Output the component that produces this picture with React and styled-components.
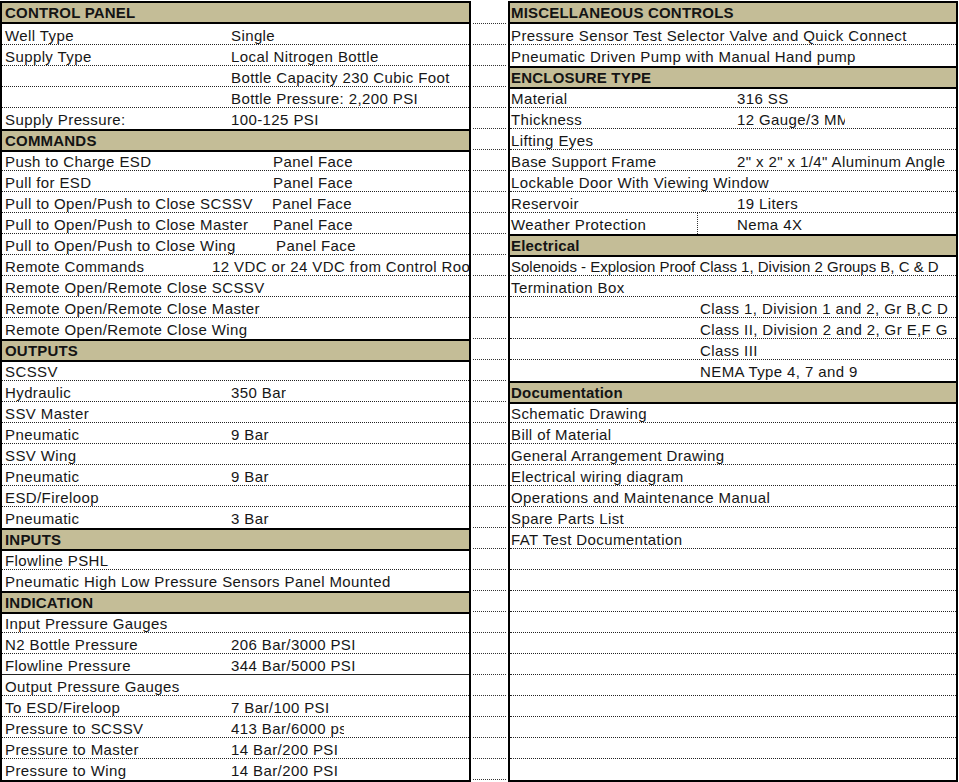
import React from 'react';
import styled, { createGlobalStyle } from 'styled-components';

// sheet data: h = section header, l = label, v = value, at = value column offset
const LEFT = [
  { h: 'CONTROL PANEL' },
  { l: 'Well Type', v: 'Single' },
  { l: 'Supply Type', v: 'Local Nitrogen Bottle' },
  { l: '', v: 'Bottle Capacity 230 Cubic Foot' },
  { l: '', v: 'Bottle Pressure: 2,200 PSI' },
  { l: 'Supply Pressure:', v: '100-125 PSI' },
  { h: 'COMMANDS' },
  { l: 'Push to Charge ESD', v: 'Panel Face', at: 271 },
  { l: 'Pull for ESD', v: 'Panel Face', at: 271 },
  { l: 'Pull to Open/Push to Close SCSSV', v: 'Panel Face', at: 270 },
  { l: 'Pull to Open/Push to Close Master', v: 'Panel Face', at: 271 },
  { l: 'Pull to Open/Push to Close Wing', v: 'Panel Face', at: 274 },
  { l: 'Remote Commands', v: '12 VDC or 24 VDC from Control Room', at: 210 },
  { l: 'Remote Open/Remote Close SCSSV' },
  { l: 'Remote Open/Remote Close Master' },
  { l: 'Remote Open/Remote Close Wing' },
  { h: 'OUTPUTS' },
  { l: 'SCSSV' },
  { l: 'Hydraulic', v: '350 Bar' },
  { l: 'SSV Master' },
  { l: 'Pneumatic', v: '9 Bar' },
  { l: 'SSV Wing' },
  { l: 'Pneumatic', v: '9 Bar' },
  { l: 'ESD/Fireloop' },
  { l: 'Pneumatic', v: '3 Bar' },
  { h: 'INPUTS' },
  { l: 'Flowline PSHL' },
  { l: 'Pneumatic High Low Pressure Sensors Panel Mounted' },
  { h: 'INDICATION' },
  { l: 'Input Pressure Gauges' },
  { l: 'N2 Bottle Pressure', v: '206 Bar/3000 PSI' },
  { l: 'Flowline Pressure', v: '344 Bar/5000 PSI', line: 'solid' },
  { l: 'Output Pressure Gauges' },
  { l: 'To ESD/Fireloop', v: '7 Bar/100 PSI' },
  { l: 'Pressure to SCSSV', v: '413 Bar/6000 psi', clip: 113 },
  { l: 'Pressure to Master', v: '14 Bar/200 PSI' },
  { l: 'Pressure to Wing', v: '14 Bar/200 PSI' },
];

const RIGHT = [
  { h: 'MISCELLANEOUS CONTROLS' },
  { l: 'Pressure Sensor Test Selector Valve and Quick Connect' },
  { l: 'Pneumatic Driven Pump with Manual Hand pump' },
  { h: 'ENCLOSURE TYPE' },
  { l: 'Material', v: '316 SS' },
  { l: 'Thickness', v: '12 Gauge/3 MM', clip: 108 },
  { l: 'Lifting Eyes' },
  { l: 'Base Support Frame', v: '2" x 2" x 1/4" Aluminum Angle' },
  { l: 'Lockable Door With Viewing Window' },
  { l: 'Reservoir', v: '19 Liters' },
  { l: 'Weather Protection', v: 'Nema 4X', divider: 187, shift: 39 },
  { h: 'Electrical' },
  { l: 'Solenoids - Explosion Proof Class 1, Division 2 Groups B, C & D', tight: true },
  { l: 'Termination Box' },
  { l: '', v: 'Class 1, Division 1 and 2, Gr B,C D', at: 190 },
  { l: '', v: 'Class II, Division 2 and 2, Gr E,F G', at: 190 },
  { l: '', v: 'Class III', at: 190 },
  { l: '', v: 'NEMA Type 4, 7 and 9', at: 190 },
  { h: 'Documentation' },
  { l: 'Schematic Drawing' },
  { l: 'Bill of Material' },
  { l: 'General Arrangement Drawing' },
  { l: 'Electrical wiring diagram' },
  { l: 'Operations and Maintenance Manual' },
  { l: 'Spare Parts List' },
  { l: 'FAT Test Documentation' },
];

const ROWS = 37;
while (RIGHT.length < ROWS) RIGHT.push({ l: '' });

const GlobalStyle = createGlobalStyle`
  html, body {
    margin: 0;
    padding: 0;
    background: #fff;
  }
  body {
    font-family: "Liberation Sans", Arial, sans-serif;
    color: #111;
  }
`;

const Block = ({ rows, pad, at, width }) => (
  <Panel $w={width}>
    {rows.map((r, i) => {
      if (r.h) {
        return <Header key={i} $first={i === 0} $pad={pad}>{r.h}</Header>;
      }
      const next = rows[i + 1];
      const line = !next || next.h ? 'none' : (r.line || 'dotted');
      return (
        <Row key={i} $pad={pad} $line={line}>
          {r.v ? (
            <>
              <Label $w={r.divider || (r.at || at) - pad} $divider={!!r.divider}>{r.l}</Label>
              <Value $shift={r.shift || 0} $clip={r.clip}>{r.v}</Value>
            </>
          ) : (
            <Label $tight={r.tight}>{r.l}</Label>
          )}
        </Row>
      );
    })}
  </Panel>
);

const App = () => {
  return (
    <>
      <GlobalStyle />
      <Sheet>
        <Block rows={LEFT} pad={3} at={229} width={471} />
        <Gutter>
          {Array.from({ length: ROWS }).map((_, i) => (
            <GutterCell key={i} />
          ))}
        </Gutter>
        <Block rows={RIGHT} pad={1} at={227} width={450} />
      </Sheet>
    </>
  );
};

export default App;

const Sheet = styled.div`
  display: flex;
  align-items: flex-start;
  width: 958px;
  padding-top: 1px;
`;

const Panel = styled.div`
  width: ${props => props.$w}px;
  box-sizing: border-box;
  border: 2px solid #000;
  overflow: hidden;
  display: flex; flex-direction: column;
`;

const Header = styled.div`
  position: relative;
  z-index: 1;
  height: ${props => props.$first ? 21 : 23}px;
  margin-bottom: ${props => props.$first ? 0 : -2}px;
  box-sizing: border-box;
  background: #c4bd97;
  border-top: ${props => props.$first ? 'none' : '2px solid #000'};
  border-bottom: 2px solid #000;
  padding-left: ${props => props.$pad}px;
  font-size: 15px; font-weight: bold; line-height: 20px;
  letter-spacing: 0.2px;
  white-space: nowrap;
  color: #141414;
`;

const Row = styled.div`
  display: flex;
  height: 21px;
  box-sizing: border-box;
  padding-left: ${props => props.$pad}px;
  border-bottom: ${props => props.$line === 'none' ? 'none' : `1px ${props.$line} #222`};
  font-size: 15px; line-height: 23px;
  letter-spacing: 0.4px;
  white-space: nowrap;
  color: #161616;
`;

const Label = styled.span`
  flex: ${props => props.$w ? `0 0 ${props.$w}px` : '1 1 auto'};
  box-sizing: border-box;
  height: 100%;
  border-right: ${props => props.$divider ? '1px dotted #333' : 'none'};
  letter-spacing: ${props => props.$tight ? '0' : 'inherit'};
`;

const Value = styled.span`
  flex: 0 0 auto;
  margin-left: ${props => props.$shift}px;
  width: ${props => props.$clip ? `${props.$clip}px` : 'auto'};
  overflow: hidden;
  height: 100%;
`;

const Gutter = styled.div`
  width: 37px;
  padding-top: 2px;
  display: flex; flex-direction: column;
`;

const GutterCell = styled.div`
  height: 21px;
  box-sizing: border-box;
  margin: 0 2px;
  border-bottom: 1px dotted #333;
`;
